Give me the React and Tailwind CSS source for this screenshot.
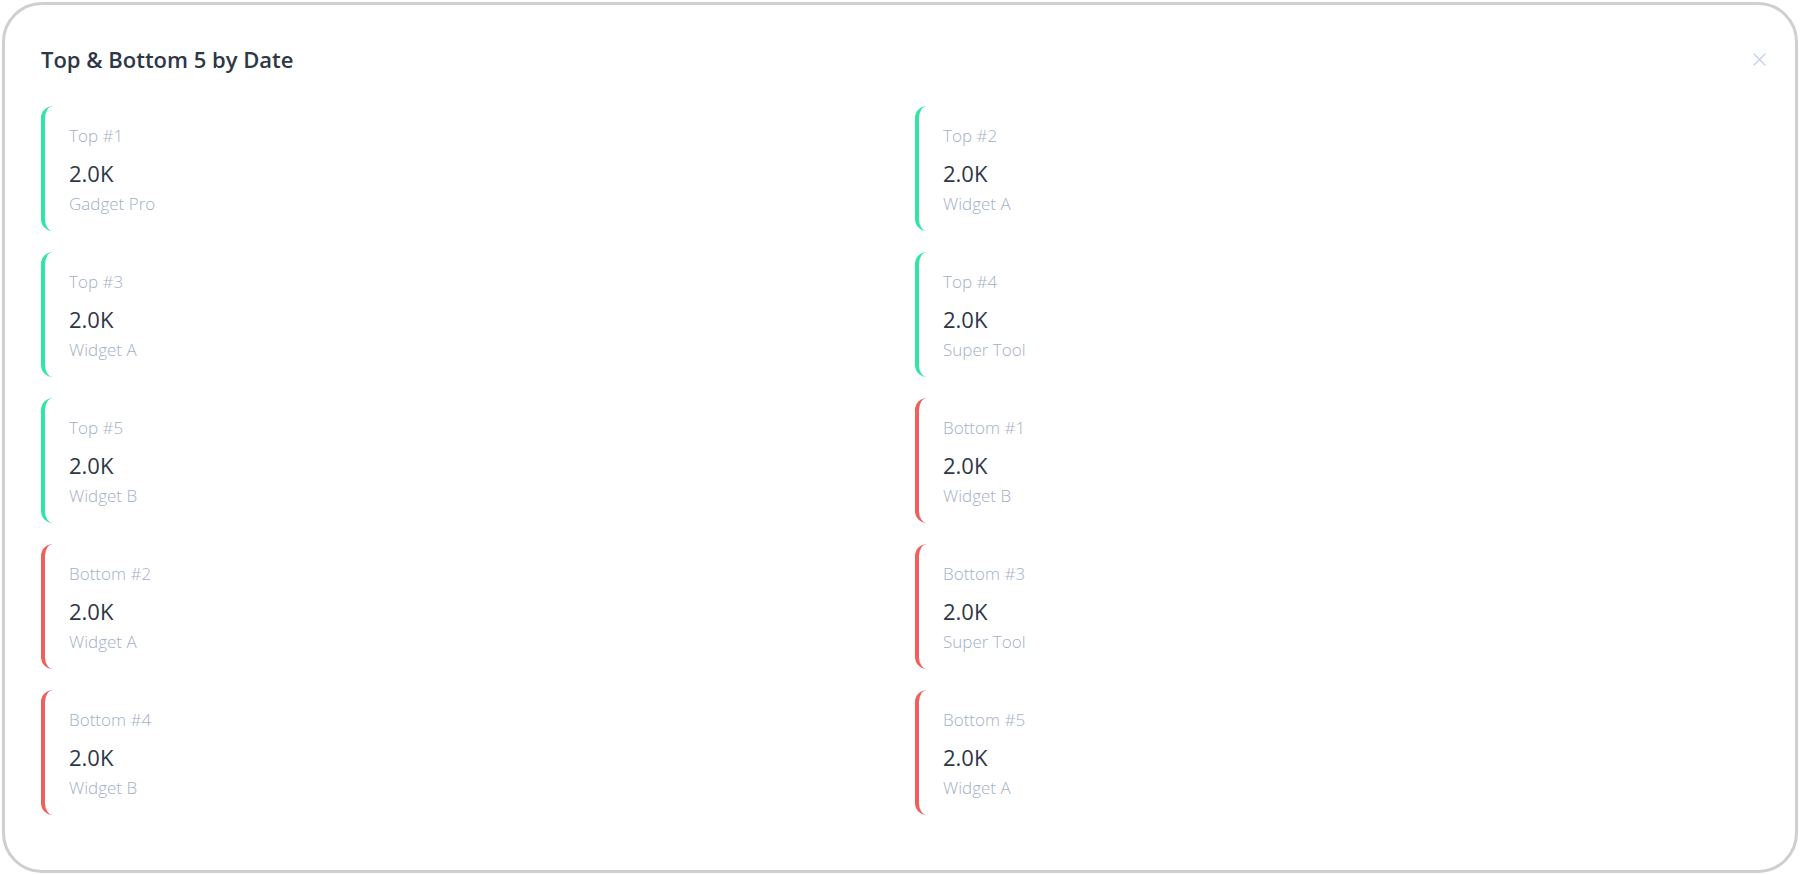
import React from 'react'

const ITEMS = [
  { label: 'Top #1', value: '2.0K', name: 'Gadget Pro', kind: 'top' },
  { label: 'Top #2', value: '2.0K', name: 'Widget A', kind: 'top' },
  { label: 'Top #3', value: '2.0K', name: 'Widget A', kind: 'top' },
  { label: 'Top #4', value: '2.0K', name: 'Super Tool', kind: 'top' },
  { label: 'Top #5', value: '2.0K', name: 'Widget B', kind: 'top' },
  { label: 'Bottom #1', value: '2.0K', name: 'Widget B', kind: 'bottom' },
  { label: 'Bottom #2', value: '2.0K', name: 'Widget A', kind: 'bottom' },
  { label: 'Bottom #3', value: '2.0K', name: 'Super Tool', kind: 'bottom' },
  { label: 'Bottom #4', value: '2.0K', name: 'Widget B', kind: 'bottom' },
  { label: 'Bottom #5', value: '2.0K', name: 'Widget A', kind: 'bottom' },
]

function RankCard({ item }) {
  const edge = item.kind === 'top' ? 'border-[#2fe6a4]' : 'border-[#ef5f5c]'
  return (
    <div className={`h-[125px] rounded-[12px] border-l-4 ${edge} bg-white pl-6 pt-[19px]`}>
      <div className="text-[17px] leading-[22px] font-light text-[#a3afc6]">{item.label}</div>
      <div className="mt-[12px] text-[22px] leading-[28px] font-medium text-[#2d3748]">{item.value}</div>
      <div className="mt-[6px] text-[17px] leading-[22px] font-light text-[#a3afc6]">{item.name}</div>
    </div>
  )
}

export default function App() {
  return (
    <div className="h-[875px] w-full bg-white p-[2px]" style={{ fontFamily: '"Open Sans", "Noto Sans", sans-serif' }}>
      <div className="h-full rounded-[40px] border-[3px] border-[#cfcfcf] bg-white px-9 pt-10">
        <div className="flex items-center justify-between">
          <h2 className="text-[22px] leading-[28px] font-semibold text-[#2d3748]">Top &amp; Bottom 5 by Date</h2>
          <button className="-mr-[7px] text-[#c5cdf0]">
            <svg width="13" height="13" viewBox="0 0 13 13" fill="none" stroke="currentColor" strokeWidth="1.3" strokeLinecap="round">
              <path d="M1 1 L12 12 M12 1 L1 12" />
            </svg>
          </button>
        </div>

        <div className="mt-[33px] grid grid-cols-2 gap-x-[30px] gap-y-[21px]">
          {ITEMS.map((item) => (
            <RankCard key={item.label} item={item} />
          ))}
        </div>
      </div>
    </div>
  )
}
